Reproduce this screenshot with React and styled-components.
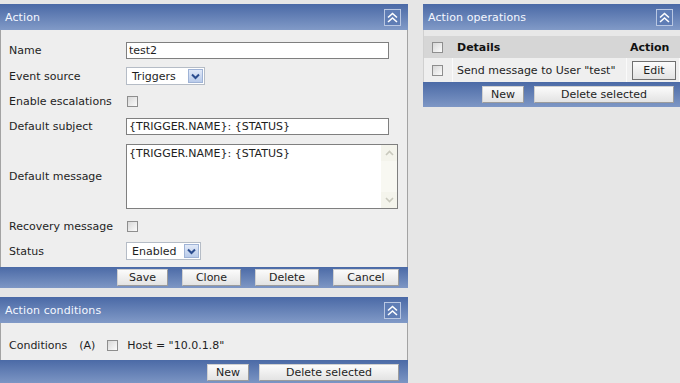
import React from "react";
import styled, { createGlobalStyle } from "styled-components";

const GlobalStyle = createGlobalStyle`
    body {
        margin: 0;
        background-color: #e6e6e6;
        font-family: "DejaVu Sans", Verdana, sans-serif;
        font-size: 11px;
        color: #1e1e1e;
    }
`;

const Page = styled.div`
    display: flex;
    align-items: flex-start;
    gap: 15px;
    padding-top: 4px;
    width: 680px;
    height: 379px;
    overflow: hidden;
`;

const Column = styled.div`
    width: ${(p) => p.$w}px;
    flex-shrink: 0;
    display: flex;
    flex-direction: column;
    gap: 9px;
`;

const Panel = styled.div`
    display: flex;
    flex-direction: column;
`;

//파란 헤더
const PanelHeader = styled.div`
    height: 26px;
    padding: 0 7px 0 5px;
    display: flex;
    align-items: center;
    justify-content: space-between;
    background: linear-gradient(#4a69a6, #819ac7);
    color: #f4f7ff;
    letter-spacing: 0.1px;
`;

const CollapseBox = styled.span`
    width: 17px;
    height: 17px;
    box-sizing: border-box;
    border: 1px solid #b9c7e2;
    background: #5f7db5;
    display: flex;
    align-items: center;
    justify-content: center;
`;

const Body = styled.div`
    background-color: #eeeeee;
    border-left: 1px solid #a3a3a3;
    border-right: 1px solid #a3a3a3;
    padding: ${(p) => p.$pad};
`;

const Row = styled.div`
    height: ${(p) => p.$h}px;
    display: grid;
    grid-template-columns: 125px 1fr;
    align-items: center;
`;

const Label = styled.span`
    padding-left: 8px;
`;

const TextInput = styled.input`
    width: 263px;
    height: 17px;
    box-sizing: border-box;
    border: 1px solid #7f7f7f;
    background: #fff;
    padding: 0 2px;
    font-family: "DejaVu Sans", Verdana, sans-serif;
    font-size: 11px;
    color: #1e1e1e;
    outline: none;
`;

const Select = styled.div`
    width: ${(p) => p.$w}px;
    height: 18px;
    box-sizing: border-box;
    border: 1px solid #b5bcc6;
    background: #fff;
    display: flex;
    align-items: center;
    justify-content: space-between;
    padding: 0 1px 0 5px;
`;

const DropButton = styled.span`
    width: 15px;
    height: 14px;
    box-sizing: border-box;
    border: 1px solid #9fb3d6;
    background: linear-gradient(#e1e9f8, #b9cbea);
    display: flex;
    align-items: center;
    justify-content: center;
`;

const Check = styled.span`
    width: 11px;
    height: 11px;
    box-sizing: border-box;
    border: 1px solid #8e8e8e;
    background: linear-gradient(135deg, #d8d8d8, #fbfbfb);
    margin-left: ${(p) => p.$ml || 0}px;
`;

const MessageBox = styled.div`
    width: 272px;
    height: 65px;
    box-sizing: border-box;
    border: 1px solid #7f7f7f;
    background: #fff;
    display: flex;
`;

const MessageText = styled.div`
    flex: 1;
    padding: 2px 2px;
`;

const ScrollBar = styled.div`
    width: 16px;
    background: #f8f8f2;
    display: flex;
    flex-direction: column;
    justify-content: space-between;
`;

const ScrollArrow = styled.span`
    height: 16px;
    display: flex;
    align-items: center;
    justify-content: center;
    background: #f4f4ec;
`;

//하단 버튼 바
const Footer = styled.div`
    height: ${(p) => p.$h || 21}px;
    box-sizing: border-box;
    display: flex;
    align-items: ${(p) => p.$align || "center"};
    justify-content: flex-end;
    gap: ${(p) => p.$gap}px;
    padding-right: ${(p) => p.$pr}px;
    padding-top: ${(p) => p.$pt || 0}px;
    background: linear-gradient(#4b6aa6, #7e97c5);
`;

const Button = styled.button`
    width: ${(p) => p.$w}px;
    height: 17px;
    box-sizing: border-box;
    padding: 0;
    border: 1px solid #9c9c9c;
    border-top-color: #d0d0d0;
    border-left-color: #d0d0d0;
    background: linear-gradient(#fbfbfb, #e3e3e3);
    font-family: "DejaVu Sans", Verdana, sans-serif;
    font-size: 11px;
    color: #1e1e1e;
`;

const ConditionRow = styled.div`
    height: 26px;
    display: flex;
    align-items: center;
    padding-left: 8px;

    & .tag {
        margin-left: 12px;
    }
    & .host {
        margin-left: 9px;
    }
`;

const OpsBody = styled.div`
    background-color: #e8e8e8;
    border-left: 1px solid #d0d0d0;
    padding-top: 6px;
`;

const OpsTable = styled.div`
    display: grid;
    grid-template-columns: 29px 174px 1fr;
`;

const Cell = styled.div`
    height: ${(p) => p.$h}px;
    display: flex;
    align-items: center;
    padding-left: ${(p) => p.$pl || 0}px;
    background: ${(p) => (p.$head ? "#d6d6d6" : "#efefef")};
    border-right: 1px solid ${(p) => (p.$head ? "#d6d6d6" : "#fafafa")};
    font-weight: ${(p) => (p.$head ? "bold" : "normal")};
    color: ${(p) => (p.$head ? "#111" : "#1e1e1e")};
    box-sizing: border-box;
`;

const EditButton = styled(Button)`
    width: 44px;
    height: 19px;
    border: 1px solid #707070;
`;

const Chevrons = () => (
    <svg width="13" height="13" viewBox="0 0 13 13">
        <path d="M2 6.5 L6.5 2.5 L11 6.5 M2 11 L6.5 7 L11 11" fill="none" stroke="#ffffff" strokeWidth="1.6" />
    </svg>
);

const DownArrow = () => (
    <svg width="9" height="7" viewBox="0 0 9 7">
        <path d="M1 1.5 L4.5 5 L8 1.5" fill="none" stroke="#2c4d8f" strokeWidth="2" />
    </svg>
);

const ScrollGlyph = ({ up }) => (
    <svg width="9" height="6" viewBox="0 0 9 6">
        <path d={up ? "M1 5 L4.5 1.5 L8 5" : "M1 1 L4.5 4.5 L8 1"} fill="none" stroke="#c9c9bd" strokeWidth="1.6" />
    </svg>
);

const Header = ({ title }) => (
    <PanelHeader>
        <span>{title}</span>
        <CollapseBox>
            <Chevrons />
        </CollapseBox>
    </PanelHeader>
);

export default function App() {
    return (
        <>
            <GlobalStyle />
            <Page>
                <Column $w={408}>
                    {/* 액션 */}
                    <Panel>
                        <Header title="Action" />
                        <Body $pad="7px 0 4px 0">
                            <Row $h={26}>
                                <Label>Name</Label>
                                <TextInput defaultValue="test2" readOnly />
                            </Row>
                            <Row $h={26}>
                                <Label>Event source</Label>
                                <Select $w={79}>
                                    <span>Triggers</span>
                                    <DropButton><DownArrow /></DropButton>
                                </Select>
                            </Row>
                            <Row $h={25}>
                                <Label>Enable escalations</Label>
                                <Check $ml={1} />
                            </Row>
                            <Row $h={25}>
                                <Label>Default subject</Label>
                                <TextInput defaultValue="{TRIGGER.NAME}: {STATUS}" readOnly />
                            </Row>
                            <Row $h={74}>
                                <Label>Default message</Label>
                                <MessageBox>
                                    <MessageText>{"{TRIGGER.NAME}: {STATUS}"}</MessageText>
                                    <ScrollBar>
                                        <ScrollArrow><ScrollGlyph up /></ScrollArrow>
                                        <ScrollArrow><ScrollGlyph /></ScrollArrow>
                                    </ScrollBar>
                                </MessageBox>
                            </Row>
                            <Row $h={26}>
                                <Label>Recovery message</Label>
                                <Check $ml={1} />
                            </Row>
                            <Row $h={24}>
                                <Label>Status</Label>
                                <Select $w={75}>
                                    <span>Enabled</span>
                                    <DropButton><DownArrow /></DropButton>
                                </Select>
                            </Row>
                        </Body>
                        <Footer $gap={14} $pr={9}>
                            <Button $w={51}>Save</Button>
                            <Button $w={59}>Clone</Button>
                            <Button $w={64}>Delete</Button>
                            <Button $w={66}>Cancel</Button>
                        </Footer>
                    </Panel>

                    {/* 조건 */}
                    <Panel>
                        <Header title="Action conditions" />
                        <Body $pad="9px 0 2px 0">
                            <ConditionRow>
                                <span>Conditions</span>
                                <span className="tag">(A)</span>
                                <Check $ml={12} />
                                <span className="host">Host = "10.0.1.8"</span>
                            </ConditionRow>
                        </Body>
                        <Footer $h={24} $gap={10} $pr={9} $pt={4} $align="flex-start">
                            <Button $w={42}>New</Button>
                            <Button $w={140}>Delete selected</Button>
                        </Footer>
                    </Panel>
                </Column>

                <Column $w={257}>
                    {/* 오퍼레이션 */}
                    <Panel>
                        <Header title="Action operations" />
                        <OpsBody>
                            <OpsTable>
                                <Cell $head $h={22} $pl={8}><Check /></Cell>
                                <Cell $head $h={22} $pl={4}>Details</Cell>
                                <Cell $head $h={22} $pl={3}>Action</Cell>
                                <Cell $h={24} $pl={8}><Check /></Cell>
                                <Cell $h={24} $pl={4}>Send message to User "test"</Cell>
                                <Cell $h={24} $pl={5}><EditButton>Edit</EditButton></Cell>
                            </OpsTable>
                        </OpsBody>
                        <Footer $h={25} $gap={10} $pr={6}>
                            <Button $w={42}>New</Button>
                            <Button $w={140}>Delete selected</Button>
                        </Footer>
                    </Panel>
                </Column>
            </Page>
        </>
    );
}
